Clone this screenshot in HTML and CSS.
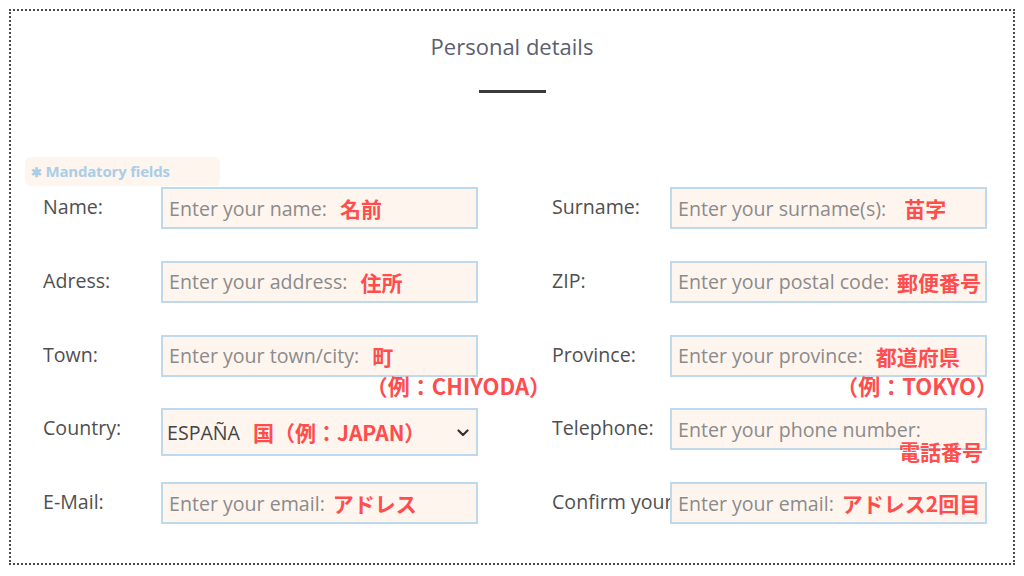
FILE: index.html
```html
<!DOCTYPE html>
<html lang="en">
<head>
  <meta charset="UTF-8">
  <title>Personal details</title>
  <meta name="viewport" content="width=device-width, initial-scale=1.0">
  <link rel="stylesheet" href="styles.css">
</head>
<body>

<div class="form-box">
  <h2 class="title">Personal details</h2>
  <div class="title-line"></div>

  <div class="mandatory"><span class="star">&#10033;</span> Mandatory fields</div>

  <div class="form-grid">
    <div class="field">
      <label class="label">Name:</label>
      <div class="input"><span class="ph">Enter your name:</span><span class="note">名前</span></div>
    </div>
    <div class="field">
      <label class="label">Surname:</label>
      <div class="input"><span class="ph">Enter your surname(s):</span><span class="note gap-l">苗字</span></div>
    </div>

    <div class="field">
      <label class="label">Adress:</label>
      <div class="input"><span class="ph">Enter your address:</span><span class="note">住所</span></div>
    </div>
    <div class="field">
      <label class="label">ZIP:</label>
      <div class="input"><span class="ph">Enter your postal code:</span><span class="note gap-s">郵便番号</span></div>
    </div>

    <div class="field">
      <label class="label">Town:</label>
      <div class="input"><span class="ph">Enter your town/city:</span><span class="note">町</span>
        <span class="note below town-ex">（例：CHIYODA）</span>
      </div>
    </div>
    <div class="field">
      <label class="label">Province:</label>
      <div class="input"><span class="ph">Enter your province:</span><span class="note">都道府県</span>
        <span class="note below prov-ex">（例：TOKYO）</span>
      </div>
    </div>

    <div class="field">
      <label class="label">Country:</label>
      <div class="input select"><span class="val">ESPAÑA</span><span class="note">国（例：JAPAN）</span>
        <svg class="chevron" width="12" height="8" viewBox="0 0 12 8"><path d="M1.5 1.5 L6 6 L10.5 1.5" fill="none" stroke="#333" stroke-width="2.2" stroke-linecap="round" stroke-linejoin="round"/></svg>
      </div>
    </div>
    <div class="field">
      <label class="label">Telephone:</label>
      <div class="input"><span class="ph">Enter your phone number:</span>
        <span class="note below tel-ex">電話番号</span>
      </div>
    </div>

    <div class="field">
      <label class="label">E-Mail:</label>
      <div class="input"><span class="ph">Enter your email:</span><span class="note gap-s">アドレス</span></div>
    </div>
    <div class="field">
      <label class="label">Confirm your email:</label>
      <div class="input"><span class="ph">Enter your email:</span><span class="note gap-s">アドレス2回目</span></div>
    </div>
  </div>
</div>

</body>
</html>
```

FILE: styles.css
```css
body { margin: 0; background: #fff; font-family: "Open Sans", "Noto Sans", sans-serif; }

.form-box { margin: 9px; border: 2px dotted #4a4a4a; box-sizing: border-box; height: 556px; }

.title { margin: 19px 0 0; text-align: center; font-size: 22px; font-weight: 400; color: #5b6070; line-height: 32px; }
.title-line { width: 67px; height: 3px; background: #3a3a3a; margin: 28px auto 0; }

.mandatory { margin: 64px 0 0 14px; width: 195px; height: 29px; box-sizing: border-box; padding: 4px 0 0 6px; background: #fef5ef; border-radius: 6px; color: #a9cde6; font-size: 15px; font-weight: 700; line-height: 20px; letter-spacing: -0.2px; }
.mandatory .star { font-size: 13px; }

.form-grid { display: grid; grid-template-columns: 435px 435px; column-gap: 74px; grid-auto-rows: 73.75px; margin: 1px 0 0 32px; }

.field { display: flex; align-items: flex-start; }
.label { width: 118px; flex-shrink: 0; white-space: nowrap; overflow: hidden; font-size: 19.6px; color: #4f4f4f; line-height: 42px; margin-top: -1px; }

.input { position: relative; display: flex; align-items: center; width: 317px; height: 42px; box-sizing: border-box; padding-left: 6px; background: #fef5ef; border: 2px solid #bfd9ec; white-space: nowrap; }
.input.select { height: 48px; padding-left: 4px; }

.ph { font-size: 19.6px; color: #8b8b8b; }
.val { font-size: 19.6px; color: #444; }

.note { font-family: "Noto Sans CJK JP", "Noto Sans", sans-serif; font-weight: 700; font-size: 21px; color: #ff4d4d; margin-left: 13px; }
.note.gap-l { margin-left: 18px; }
.note.gap-s { margin-left: 8px; }

.below { position: absolute; margin: 0; line-height: 26px; font-size: 22px; }
.town-ex { top: 35px; right: -75px; }
.prov-ex { top: 35px; right: -13px; }
.tel-ex { top: 28px; right: 2px; font-size: 21px; }

.chevron { position: absolute; right: 7px; top: 19px; }
```
